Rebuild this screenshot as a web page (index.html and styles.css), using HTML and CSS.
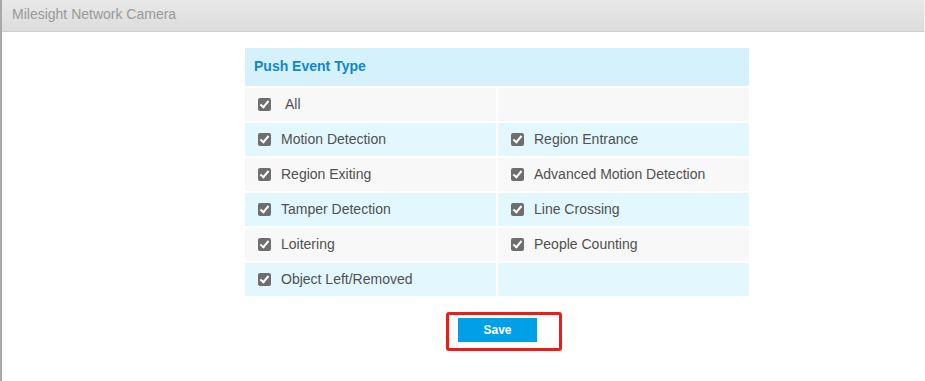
FILE: index.html
```html
<!DOCTYPE html>
<html lang="en">
<head>
    <meta charset="UTF-8">
    <title>Milesight Network Camera</title>
    <link rel="stylesheet" href="styles.css">
</head>
<body>
    <div class="top-bar">Milesight Network Camera</div>

    <div class="content">
        <div class="event-table">
            <div class="event-head">Push Event Type</div>

            <div class="cell row-gray"><span class="check"></span><span class="label label-all">All</span></div>
            <div class="cell row-gray"></div>

            <div class="cell row-blue"><span class="check"></span><span class="label">Motion Detection</span></div>
            <div class="cell row-blue"><span class="check"></span><span class="label">Region Entrance</span></div>

            <div class="cell row-gray"><span class="check"></span><span class="label">Region Exiting</span></div>
            <div class="cell row-gray"><span class="check"></span><span class="label">Advanced Motion Detection</span></div>

            <div class="cell row-blue"><span class="check"></span><span class="label">Tamper Detection</span></div>
            <div class="cell row-blue"><span class="check"></span><span class="label">Line Crossing</span></div>

            <div class="cell row-gray"><span class="check"></span><span class="label">Loitering</span></div>
            <div class="cell row-gray"><span class="check"></span><span class="label">People Counting</span></div>

            <div class="cell row-blue"><span class="check"></span><span class="label">Object Left/Removed</span></div>
            <div class="cell row-blue"></div>
        </div>

        <!-- highlighted save button -->
        <div class="save-mark">
            <button class="save-button">Save</button>
        </div>
    </div>
</body>
</html>
```

FILE: styles.css
```css
body {
    margin: 0;
    min-height: 381px;
    font-family: "Liberation Sans", Arial, sans-serif;
    background-color: #fff;
    border-left: 2px solid #a9a9a9;
    box-sizing: border-box;
}

.top-bar {
    height: 31px;
    line-height: 28px;
    padding-left: 10px;
    font-size: 14px;
    color: #999;
    background: linear-gradient(#e9e9e9, #dcdcdc);
    border-bottom: 1px solid #cfcfcf;
    border-right: 1px solid #f4f4f4;
}

.content {
    padding: 16px 0 0 243px;
}

.event-table {
    width: 504px;
    display: grid;
    grid-template-columns: 251px 251px;
    column-gap: 2px;
    row-gap: 2px;
}

.event-head {
    grid-column: 1 / 3;
    height: 38px;
    line-height: 37px;
    padding-left: 9px;
    background-color: #d4f1fc;
    color: #1187c9;
    font-weight: bold;
    font-size: 14px;
}

.cell {
    height: 33px;
    display: flex;
    align-items: center;
    padding-left: 13px;
    padding-bottom: 1px;
    box-sizing: border-box;
    height: 33px;
    font-size: 14px;
    color: #505050;
}

.row-gray {
    background-color: #f8f8f8;
}

.row-blue {
    background-color: #e2f8fe;
}

.check {
    width: 13px;
    height: 13px;
    border-radius: 2px;
    background-color: #6e6e6e;
    position: relative;
    flex-shrink: 0;
}

/* white tick inside the box */
.check::after {
    content: "";
    position: absolute;
    left: 4px;
    top: 1px;
    width: 3px;
    height: 7px;
    border: solid #fff;
    border-width: 0 2px 2px 0;
    transform: rotate(40deg);
}

.label {
    margin-left: 10px;
}

.label-all {
    margin-left: 14px;
}

.save-mark {
    width: 116px;
    height: 39px;
    margin: 16px 0 0 201px;
    border: 3px solid #ee1c14;
    border-radius: 3px;
    padding: 3px 0 0 9px;
    box-sizing: border-box;
}

.save-button {
    display: block;
    width: 79px;
    height: 24px;
    border: none;
    background-color: #00a0e8;
    color: #fff;
    font-family: "Liberation Sans", Arial, sans-serif;
    font-weight: bold;
    font-size: 12px;
    padding: 0;
}
```
